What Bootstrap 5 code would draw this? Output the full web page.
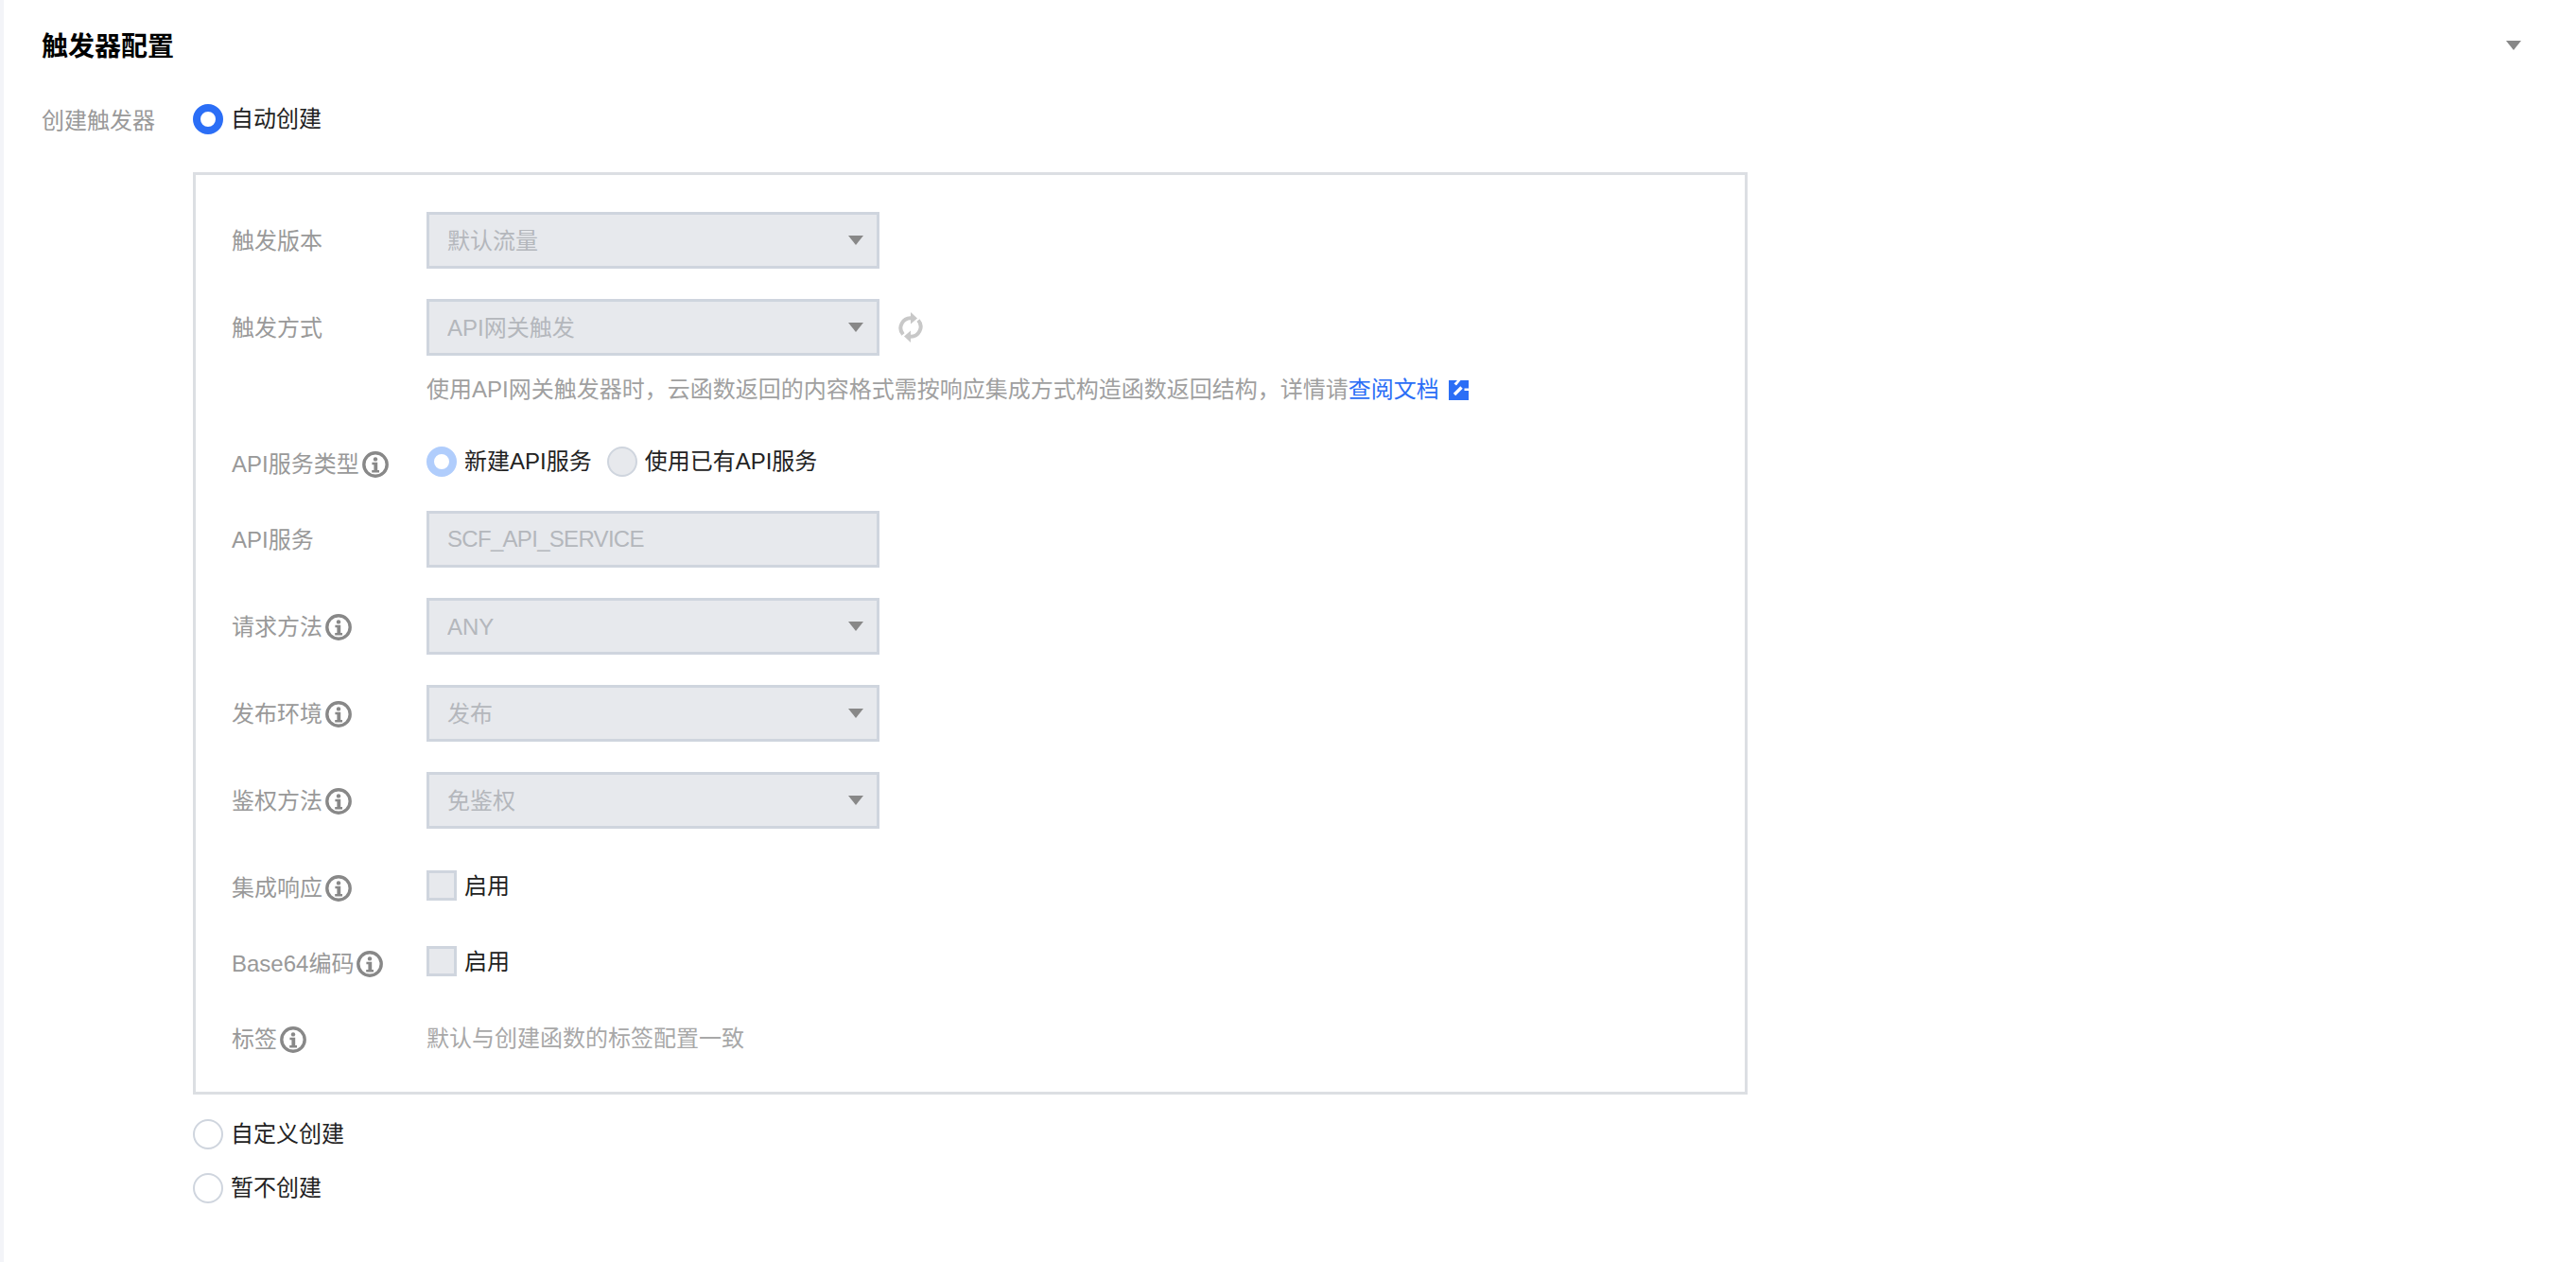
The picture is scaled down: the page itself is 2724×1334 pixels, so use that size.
<!doctype html>
<html lang="zh">
<head>
<meta charset="utf-8">
<title>触发器配置</title>
<link href="https://cdn.jsdelivr.net/npm/bootstrap@5.3.0/dist/css/bootstrap.min.css" rel="stylesheet">
<style>
html,body{height:100%}
body{font-family:"Liberation Sans","Noto Sans CJK SC",sans-serif;font-size:24px;line-height:36px;color:#222;background:#fff;border-left:4px solid #f3f4f8;overflow:hidden}
.page-wrap{padding:32px 58px 0 40px}
.sec-title{font-size:28px;font-weight:700;line-height:36px;color:#000;margin:0}
.sec-head{height:36px}
.caret-down{width:16px;height:10px;display:block;fill:#888;margin-top:-4px}
.outer-row{margin-top:42px}
.outer-label{width:160px;color:#999;flex:none}
.rd-line{height:32px}
.form-check-input.tc-radio,.form-check-input.tc-check{width:32px;height:32px;margin:0;flex:none;background-image:none;opacity:1;box-shadow:none}
.form-check-input.tc-radio{border:2.5px solid #cfd5de;background-color:#fff;border-radius:50%}
.form-check-input.tc-radio:checked{border:8px solid #2b6ef6;background-color:#fff}
.form-check-input.tc-radio:disabled{background-color:#e7e9ed;border-color:#cfd5de}
.form-check-input.tc-radio:checked:disabled{background-color:#fff;border:8px solid #b0cdfc}
.form-check-input.tc-check{border:3px solid #cfd5de;background-color:#e7e9ed;border-radius:0}
.opt-label{margin:0 0 0 8px;opacity:1!important;color:#222;line-height:32px}
.chk-row .opt-label{padding-top:1px}
.sub-box{width:1644px;margin:40px 0 26px;padding:39px 0 38px 38px;border:3px solid #dcdfe3}
.f-label{width:206px;flex:none;color:#999;display:flex;align-items:center;padding-top:2px;white-space:nowrap}
.chk-row .f-label,.type-row .f-label{padding-top:5px}
.f-row{margin-bottom:32px;height:60px}
.form-control.tc-input,.form-select.tc-input{width:479px;height:60px;flex:none;border:3px solid #cfd5de;border-radius:0;background-color:#e7e9ed;color:#b4b7bc;font-size:24px;line-height:36px;padding:0 19px;opacity:1;-webkit-text-fill-color:#b4b7bc}
.form-select.tc-input{padding-top:2px;background-repeat:no-repeat;background-position:right 14px center;background-size:16px 10px;background-image:url("data:image/svg+xml,%3Csvg xmlns='http://www.w3.org/2000/svg' viewBox='0 0 16 10'%3E%3Cpath fill='%23888' d='M0 0h16L8 10z'/%3E%3C/svg%3E")}
.form-control.tc-input{letter-spacing:-.7px}
.info-ico{width:28px;height:28px;flex:none;margin-left:3px}
.refresh-ico{width:26px;height:32px;margin-left:20px;flex:none}
.help-line{margin:-14px 0 42px 206px;color:#a0a0a0;height:36px;display:flex;align-items:center;white-space:nowrap}
.help-line a{color:#2b6ef6;text-decoration:none}
.ext-ico{width:21px;height:21px;margin-left:10px;flex:none}
.type-row{margin-bottom:36px;height:32px}
.chk-row{height:32px;margin-bottom:48px}
.plain-val{color:#a8a8a8}
.last-row{height:36px}
.gap-radio{margin-top:25px}
.auth-gap{margin-bottom:44px}
</style>
</head>
<body>
<svg width="0" height="0" class="position-absolute">
<symbol id="i-info" viewBox="0 0 28 28"><circle cx="14" cy="14" r="12.200" fill="none" stroke="#888" stroke-width="3.400"/><circle cx="14" cy="8.400" r="2.200" fill="#888"/><path fill="#888" d="M10.400 11.800h5.800v8.200h1.800v2.400h-7.800V20h2.200v-5.800h-2z"/></symbol>
</svg>
<div class="page-wrap">
  <div class="d-flex justify-content-between align-items-center sec-head">
    <h2 class="sec-title">触发器配置</h2>
    <svg class="caret-down" viewBox="0 0 16 10"><path d="M0 0h16L8 10z"/></svg>
  </div>
  <div class="d-flex outer-row">
    <div class="outer-label">创建触发器</div>
    <div>
      <div class="d-flex align-items-center rd-line">
        <input class="form-check-input tc-radio" type="radio" name="mode" id="m1" checked>
        <label class="opt-label" for="m1">自动创建</label>
      </div>
      <div class="sub-box">
        <div class="d-flex f-row">
          <div class="f-label">触发版本</div>
          <select class="form-select tc-input" disabled><option>默认流量</option></select>
        </div>
        <div class="d-flex align-items-center f-row">
          <div class="f-label">触发方式</div>
          <select class="form-select tc-input" disabled><option>API网关触发</option></select>
          <svg class="refresh-ico" viewBox="0 0 26 32"><g fill="none" stroke="#c8c8c8" stroke-width="4"><path d="M5 23.500A10.500 10.500 0 0 1 14 6.200"/><path d="M21 8.500A10.500 10.500 0 0 1 12 25.800"/></g><path fill="#c8c8c8" d="M13 0l7 6.500-7 6zM13 32l-7-6.500 7-6z"/></svg>
        </div>
        <div class="help-line">使用API网关触发器时，云函数返回的内容格式需按响应集成方式构造函数返回结构，详情请<a href="#">查阅文档</a>
          <svg class="ext-ico" viewBox="0 0 21 21"><path fill="#2b6ef6" d="M0 0h21v21H0z"/><path fill="none" stroke="#fff" stroke-width="3.400" d="M6 15l7.500-7.500"/><path fill="#fff" d="M9 0h3.500L8 5.500 5.500 3.500zM16.500 8.500H21V11h-4.500z"/></svg>
        </div>
        <div class="d-flex align-items-center type-row">
          <div class="f-label">API服务类型<svg class="info-ico"><use href="#i-info"/></svg></div>
          <input class="form-check-input tc-radio" type="radio" name="api" id="a1" checked disabled>
          <label class="opt-label" for="a1">新建API服务</label>
          <input class="form-check-input tc-radio ms-3" type="radio" name="api" id="a2" disabled>
          <label class="opt-label" for="a2">使用已有API服务</label>
        </div>
        <div class="d-flex f-row">
          <div class="f-label">API服务</div>
          <input class="form-control tc-input" value="SCF_API_SERVICE" disabled>
        </div>
        <div class="d-flex f-row">
          <div class="f-label">请求方法<svg class="info-ico"><use href="#i-info"/></svg></div>
          <select class="form-select tc-input" disabled><option>ANY</option></select>
        </div>
        <div class="d-flex f-row">
          <div class="f-label">发布环境<svg class="info-ico"><use href="#i-info"/></svg></div>
          <select class="form-select tc-input" disabled><option>发布</option></select>
        </div>
        <div class="d-flex f-row auth-gap">
          <div class="f-label">鉴权方法<svg class="info-ico"><use href="#i-info"/></svg></div>
          <select class="form-select tc-input" disabled><option>免鉴权</option></select>
        </div>
        <div class="d-flex align-items-center chk-row">
          <div class="f-label">集成响应<svg class="info-ico"><use href="#i-info"/></svg></div>
          <input class="form-check-input tc-check" type="checkbox" id="c1" disabled>
          <label class="opt-label" for="c1">启用</label>
        </div>
        <div class="d-flex align-items-center chk-row">
          <div class="f-label">Base64编码<svg class="info-ico"><use href="#i-info"/></svg></div>
          <input class="form-check-input tc-check" type="checkbox" id="c2" disabled>
          <label class="opt-label" for="c2">启用</label>
        </div>
        <div class="d-flex align-items-center last-row">
          <div class="f-label">标签<svg class="info-ico"><use href="#i-info"/></svg></div>
          <span class="plain-val">默认与创建函数的标签配置一致</span>
        </div>
      </div>
      <div class="d-flex align-items-center rd-line">
        <input class="form-check-input tc-radio" type="radio" name="mode" id="m2">
        <label class="opt-label" for="m2">自定义创建</label>
      </div>
      <div class="d-flex align-items-center rd-line gap-radio">
        <input class="form-check-input tc-radio" type="radio" name="mode" id="m3">
        <label class="opt-label" for="m3">暂不创建</label>
      </div>
    </div>
  </div>
</div>
<script src="https://cdn.jsdelivr.net/npm/bootstrap@5.3.0/dist/js/bootstrap.bundle.min.js"></script>
</body>
</html>
